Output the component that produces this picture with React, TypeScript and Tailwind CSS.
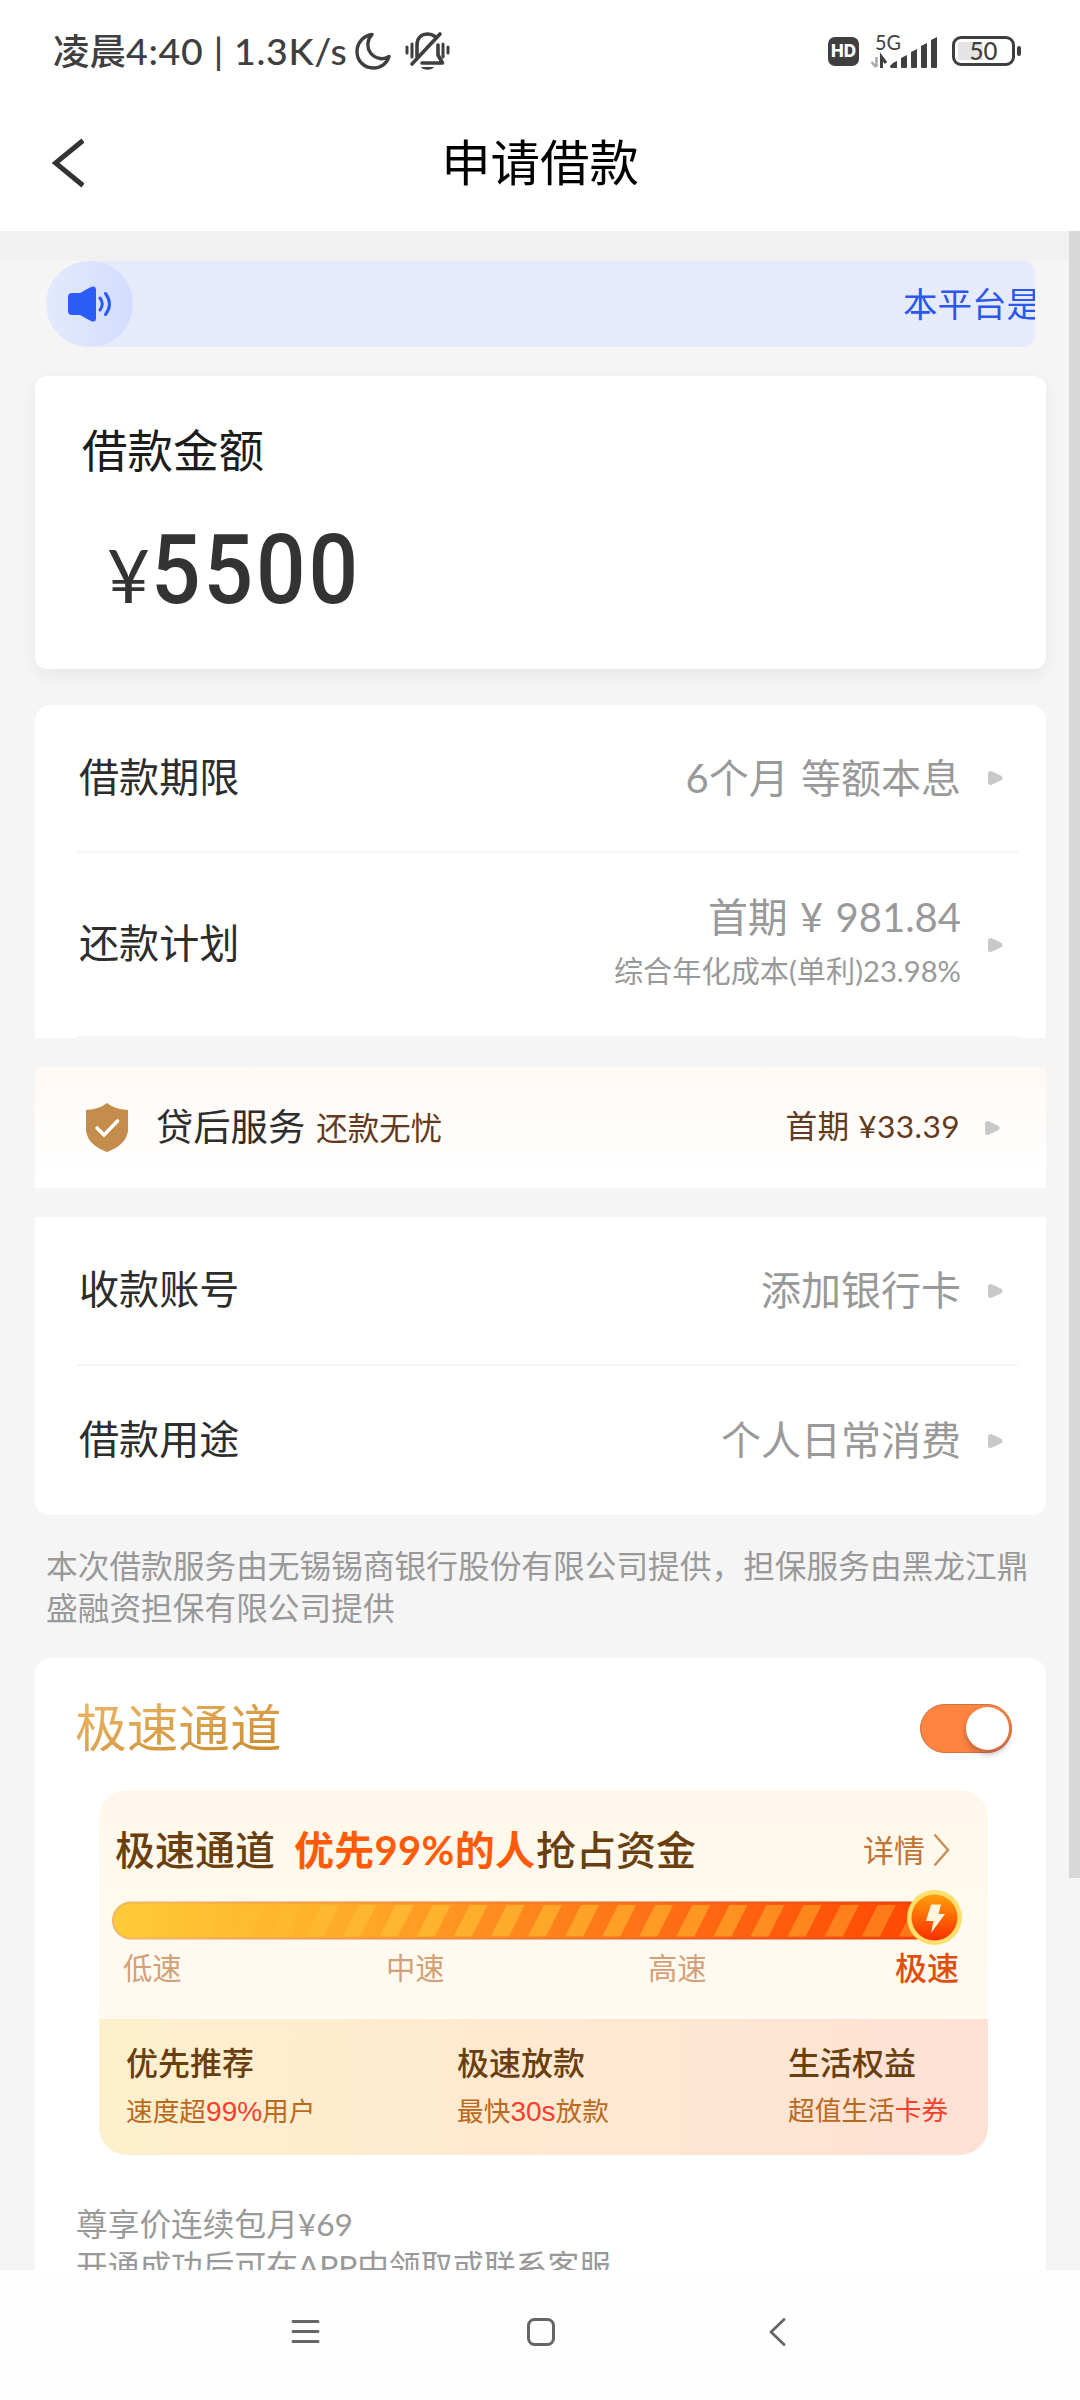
import { ReactNode } from "react";

const loanRows = [
  { label: "收款账号", value: "添加银行卡" },
  { label: "借款用途", value: "个人日常消费" },
];

const speeds = [
  { name: "低速", className: "w-[263px]" },
  { name: "中速", className: "w-[262px]" },
  { name: "高速", className: "w-[247px]" },
];

const benefits = [
  { title: "优先推荐", sub: <>速度超<b className="text-[28px] font-normal text-[#f5402c]">99%</b>用户</>, className: "w-[331px]" },
  { title: "极速放款", sub: <>最快<b className="text-[28px] font-normal text-[#f5402c]">30s</b>放款</>, className: "w-[331px]" },
  { title: "生活权益", sub: <>超值生活<b className="font-normal text-[#f5402c]">卡券</b></>, className: "" },
];

const stripes = Array.from({ length: 20 }, (_, i) => 98 + i * 37.1);

function StatusBar() {
  return (
    <div className="flex h-[102px] items-center pl-[53px] pr-[59px] text-[#3f3f3f]">
      <span className="w-[300px] whitespace-nowrap text-[36.500px] leading-none font-medium">
        凌晨<span className="text-[37.500px] tracking-[0.700px]">4:40 | 1.3K/s</span>
      </span>
      <svg className="ml-[2px] h-[38px] w-[36px]" viewBox="0 0 36 38" fill="none" stroke="currentColor" strokeWidth="3.4" strokeLinejoin="round">
        <path d="M17 2.5C8 4 2 11 2 19.500C2 29 9 36 18.500 36C26 36 32 31.500 34 24.500C31 26.500 28 27 25 26.500C17 25 12 18.500 13 11C13.400 7.500 14.800 4.600 17 2.500Z" />
      </svg>
      <svg className="ml-[14px] h-[40px] w-[45px]" viewBox="0 0 45 40" fill="none" stroke="currentColor" strokeWidth="3" strokeLinecap="round">
        <path d="M2 16v6M7 13v13M38 13v13M43 16v6" />
        <path d="M12 26V14C12 6 17 3 23 3C26 3 28 4 30 5.500M35 3L7 33M33 14V24L37.500 32H17" strokeWidth="3.600" strokeLinejoin="round" />
        <path d="M16 36h13c-2 3.500-11 3.500-13 0z" fill="currentColor" stroke="none" />
      </svg>
      <div className="ml-auto flex items-center">
        <div className="flex h-[29px] w-[31px] items-center justify-center rounded-[7px] bg-[#3f3f3f] pt-px font-[Inter] text-[17px] leading-none font-extrabold text-white">
          HD
        </div>
        <svg className="ml-[12px] h-[36px] w-[68px] overflow-visible" viewBox="0 0 68 36">
          <text x="4" y="17" fontSize="21" fontFamily="Lato" fill="#3f3f3f" textLength="26" lengthAdjust="spacingAndGlyphs">5G</text>
          <path d="M5.500 24V34M5 34L0.500 29" stroke="#a9a9a9" strokeWidth="2.500" fill="none" />
          <path d="M10.500 35V24L15 30" stroke="#3f3f3f" strokeWidth="3" fill="none" />
          <g fill="#3f3f3f">
            <path d="M19 33q3-4 7-5v7h-6q-1 0-1-2z" />
            <path d="M30 25l6-3v12q0 1-1 1h-4q-1 0-1-1z" />
            <path d="M40 19l6-3v18q0 1-1 1h-4q-1 0-1-1z" />
            <path d="M50 13l6-3v24q0 1-1 1h-4q-1 0-1-1z" />
            <path d="M60 7l6-3v30q0 1-1 1h-4q-1 0-1-1z" />
          </g>
        </svg>
        <div className="ml-[13px] flex h-[30px] w-[63px] items-center justify-center rounded-[9px] border-3 border-[#3f3f3f] bg-linear-to-r from-[#e4e4e4] from-50% to-white to-50% bg-clip-content p-[3px]">
          <span className="text-[24px] leading-none font-medium">50</span>
        </div>
        <div className="ml-[2px] h-[10px] w-[4px] rounded-sm bg-[#3f3f3f]" />
      </div>
    </div>
  );
}

function Arrow() {
  return (
    <svg className="h-[16px] w-[16px]" viewBox="0 0 16 16">
      <path d="M3.500 3.500V12.500L13 8Z" fill="#c8c8c8" stroke="#c8c8c8" strokeWidth="5" strokeLinejoin="round" />
    </svg>
  );
}

function Row({ label, children, className }: { label: string; children: ReactNode; className: string }) {
  return (
    <div className={`mr-[28px] ml-[42px] flex items-center border-[#f6f6f6] pr-[15px] pl-[2px] leading-none ${className}`}>
      <span className="-mt-[2px] text-[40.100px] text-[#2d2d2d]">{label}</span>
      <div className="-mt-px mr-[26px] ml-auto text-right text-[40px] text-[#999] [word-spacing:2px]">{children}</div>
      <Arrow />
    </div>
  );
}

function SpeedBar() {
  return (
    <svg className="-mt-[6px] block h-[60px] w-[889px]" viewBox="0 0 889 60">
      <defs>
        <linearGradient id="bar" x1="0" x2="1" y1="0" y2="0">
          <stop offset="0" stopColor="#ffcb37" />
          <stop offset="0.25" stopColor="#ffb02b" />
          <stop offset="0.5" stopColor="#ff861d" />
          <stop offset="0.75" stopColor="#ff6410" />
          <stop offset="1" stopColor="#ff4503" />
        </linearGradient>
        <linearGradient id="barEdge" x1="0" x2="1" y1="0" y2="0">
          <stop offset="0" stopColor="#eebb63" />
          <stop offset="0.5" stopColor="#f07a30" />
          <stop offset="1" stopColor="#e83c0c" />
        </linearGradient>
        <linearGradient id="stripe" gradientUnits="userSpaceOnUse" x1="80" x2="820" y1="0" y2="0">
          <stop offset="0" stopColor="#ffc63a" stopOpacity="0" />
          <stop offset="0.3" stopColor="#ffb931" stopOpacity="0.9" />
          <stop offset="0.7" stopColor="#ff9722" />
          <stop offset="1" stopColor="#ff7518" />
        </linearGradient>
        <linearGradient id="bolt" x1="0" x2="0" y1="0" y2="1">
          <stop offset="0" stopColor="#ff9f0a" />
          <stop offset="1" stopColor="#fb2d00" />
        </linearGradient>
      </defs>
      <rect x="14" y="15.500" width="822" height="36" rx="18" fill="url(#bar)" stroke="url(#barEdge)" strokeWidth="2" />
      <g fill="url(#stripe)">
        {stripes.map((x) => (
          <path key={x} d={`M${x + 13} 18h18l-16 31.500h-18z`} />
        ))}
      </g>
      <circle cx="835.500" cy="30.500" r="27.500" fill="#ffdf6b" />
      <circle cx="835.500" cy="30.500" r="23" fill="url(#bolt)" />
      <path d="M832 17.500H842L839.500 27H846L832 46L834.500 34H827Z" fill="#fff6dc" />
    </svg>
  );
}

export default function App() {
  return (
    <div className="flex h-[2400px] w-[1080px] flex-col overflow-hidden bg-white font-[Lato,'Noto_Sans_CJK_SC',sans-serif]">
      <StatusBar />

      <header className="flex h-[129px] items-start pr-[52px] pl-[52px]">
        <svg className="mt-[36px] h-[50px] w-[32px]" viewBox="0 0 32 50" fill="none" stroke="#333" strokeWidth="5">
          <path d="M31 2.500L3.500 25L31 47.500" />
        </svg>
        <h1 className="mt-[36px] mr-[32px] flex-1 text-center text-[49.400px] leading-none text-black">申请借款</h1>
      </header>

      <main className="relative h-[2039px] overflow-hidden bg-[#f5f5f5]">
        <div className="absolute top-0 right-0 h-[1647px] w-[11px] bg-[#d8d8d8]" />
        <div className="mr-[11px] h-[30px] bg-[#f1f1f1]" />

        <div className="mr-[45px] ml-[46px] flex h-[86px] items-center overflow-hidden rounded-l-[43px] rounded-r-[12px] bg-[#e6ebfb]">
          <div className="flex h-[86px] w-[87px] shrink-0 items-center justify-center rounded-full bg-linear-to-r from-[#e4eafc] to-[#d3dcfd]">
            <svg className="h-[38px] w-[46px]" viewBox="0 0 46 38" fill="none" stroke="#2a5cf6" strokeWidth="3" strokeLinecap="round">
              <path d="M5 8H13L24 2Q29 0 29 5V33Q29 38 24 36L13 30H5Q1 30 1 26V12Q1 8 5 8Z" fill="#2a5cf6" stroke="none" />
              <path d="M33 13Q37.500 19 33 25M38.500 8.500Q46.500 19 38.500 29.500" />
            </svg>
          </div>
          <div className="ml-[770px] text-[34.500px] leading-none whitespace-nowrap text-[#2b57ee]">本平台是</div>
        </div>

        <section className="mt-[29px] mr-[34px] ml-[35px] h-[293px] rounded-[12px] bg-white pt-[52px] pl-[47px] shadow-[0_6px_18px_rgba(0,0,0,0.06)]">
          <h2 className="text-[45.500px] leading-none text-[#1c1c1c]">借款金额</h2>
          <div className="mt-[46px] flex h-[100px] items-baseline pl-[25px] text-[#333]">
            <span className="text-[74px] leading-[100px]">¥</span>
            <span className="ml-px origin-left scale-x-90 font-[Roboto] text-[97px] leading-[100px] font-medium tracking-[3.200px]">5500</span>
          </div>
        </section>

        <section className="mt-[36px] mr-[34px] ml-[35px] h-[333px] rounded-t-[16px] bg-white">
          <Row label="借款期限" className="h-[148px] border-b-2">
            6个月 等额本息
          </Row>
          <Row label="还款计划" className="h-[185px] border-b-2">
            <div className="-mt-[5px]">首期 ¥ 981.84</div>
            <div className="mt-[19px] text-[29.200px] leading-none">综合年化成本(单利)23.98%</div>
          </Row>
        </section>

        <section className="mt-[29px] mr-[34px] ml-[35px] flex h-[121px] items-center bg-linear-to-b from-[#fff9f5] to-white to-90% pr-[46px] pl-[51px] leading-none">
          <svg className="h-[49px] w-[42px]" viewBox="0 0 42 49">
            <path d="M21 0Q28 6 42 7V28Q40 42 21 49Q2 42 0 28V7Q14 6 21 0Z" fill="#c58d4b" />
            <path d="M11 25L18 32L31.500 18" fill="none" stroke="#fff" strokeWidth="3.600" strokeLinecap="round" />
          </svg>
          <span className="-mt-[2px] ml-[28px] text-[37.300px] text-[#2d2d2d]">贷后服务</span>
          <span className="mt-[3px] ml-[11px] text-[31.500px] text-[#633b1c]">还款无忧</span>
          <span className="-mt-[2px] mr-[24px] ml-auto text-[31.700px] tracking-[0.400px] text-[#633b1c]">首期 ¥33.39</span>
          <Arrow />
        </section>

        <section className="mt-[29px] mr-[34px] ml-[35px] h-[298px] rounded-b-[14px] bg-white">
          {loanRows.map((row, i) => (
            <Row key={row.label} label={row.label} className={i === 0 ? "h-[149px] border-b-2" : "h-[149px]"}>
              {row.value}
            </Row>
          ))}
        </section>

        <p className="mt-[30px] ml-[46px] w-[990px] text-[31.700px] leading-[42px] text-[#999]">
          本次借款服务由无锡锡商银行股份有限公司提供，担保服务由黑龙江鼎盛融资担保有限公司提供
        </p>

        <section className="mt-[29px] mr-[34px] ml-[35px] h-[700px] rounded-[16px] bg-white pt-[42px]">
          <div className="flex h-[56px] items-center justify-between pr-[34px] pl-[40px]">
            <h2 className="-mt-[2px] bg-linear-to-br from-[#efb866] to-[#c78a2b] bg-clip-text text-[51.700px] leading-[56px] text-transparent">极速通道</h2>
            <div className="flex h-[49px] w-[92px] items-center justify-end rounded-full border border-[#cc7440] bg-[#ff8440] pr-[2px]">
              <div className="h-[43px] w-[43px] rounded-full bg-white shadow-[0_4px_6px_rgba(90,50,60,0.4)]" />
            </div>
          </div>

          <div className="mt-[34px] ml-[64px] h-[365px] w-[889px] overflow-hidden rounded-[28px] bg-[#fffaf0]">
            <div className="h-[229px] bg-linear-to-b from-[#fff8ea] to-[#fffaf2]">
              <div className="flex h-[103px] items-center pt-[17px] pl-[16px] leading-none">
                <span className="text-[40px] font-medium text-[#6a3f10]">极速通道</span>
                <span className="ml-[19px] w-[242px] text-[40px] font-bold tracking-[0.300px] whitespace-nowrap text-[#ff5a05]">优先99%的人</span>
                <span className="text-[40px] font-medium text-[#6a3f10]">抢占资金</span>
                <span className="ml-auto text-[31px] text-[#c07434]">详情</span>
                <svg className="mr-[38px] ml-[8px] h-[34px] w-[17px]" viewBox="0 0 17 34" fill="none" stroke="#c9905a" strokeWidth="2.500">
                  <path d="M1.500 1.500L15 17L1.500 32.500" />
                </svg>
              </div>
              <SpeedBar />
              <div className="mt-[5px] flex items-center pl-[24px] text-[29.300px] leading-none text-[#d3a077]">
                {speeds.map((s) => (
                  <span key={s.name} className={s.className}>{s.name}</span>
                ))}
                <span className="text-[32px] font-medium text-[#e04e0e]">极速</span>
              </div>
            </div>
            <div className="flex h-[136px] bg-linear-to-r from-[#fef0cd] via-[#ffe9d1] to-[#fee1d5] pt-[28px] pl-[27px] leading-none">
              {benefits.map((b) => (
                <div key={b.title} className={b.className}>
                  <div className="text-[32px] font-medium text-[#6a3f10]">{b.title}</div>
                  <div className="mt-[19px] font-['Liberation_Sans','Noto_Sans_CJK_SC',sans-serif] text-[26.700px] leading-none text-[#bb691d]">{b.sub}</div>
                </div>
              ))}
            </div>
          </div>

          <p className="mt-[48px] ml-[41px] text-[31.700px] leading-[42px] text-[#999]">
            尊享价连续包月¥69
            <br />
            开通成功后可在APP中领取或联系客服
          </p>
        </section>
      </main>

      <nav className="flex flex-1 items-start bg-[#fefefe] pt-[47px] pl-[291px]">
        <svg className="h-[30px] w-[29px]" viewBox="0 0 29 30" stroke="#666" strokeWidth="3" strokeLinecap="round">
          <path d="M2 4.500H27M2 14.500H27M2 24.500H27" />
        </svg>
        <svg className="ml-[206px] h-[30px] w-[30px]" viewBox="0 0 30 30" fill="none" stroke="#666" strokeWidth="3">
          <rect x="2.500" y="2.500" width="25" height="25" rx="6" />
        </svg>
        <svg className="ml-[212px] h-[30px] w-[20px]" viewBox="0 0 20 30" fill="none" stroke="#666" strokeWidth="2.800" strokeLinecap="round" strokeLinejoin="round">
          <path d="M16 2.500L3 15L16 27.500" />
        </svg>
      </nav>
    </div>
  );
}
